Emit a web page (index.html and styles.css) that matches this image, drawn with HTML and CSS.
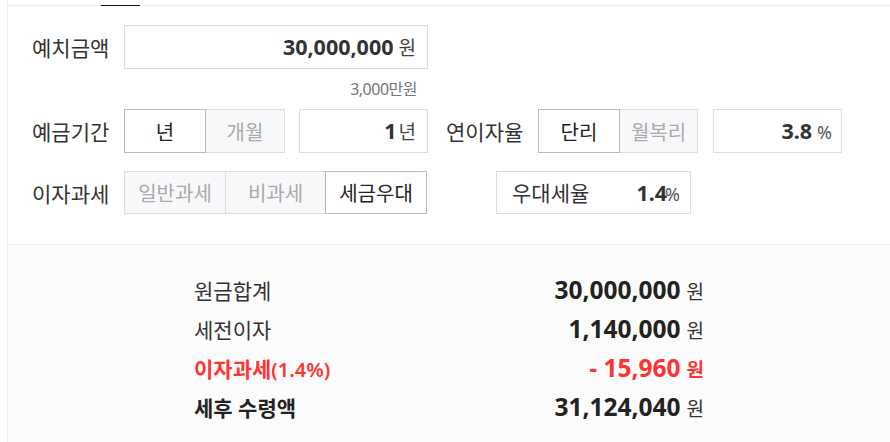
FILE: index.html
```html
<!DOCTYPE html>
<html lang="ko">
<head>
<meta charset="utf-8">
<title>예금 계산기</title>
<link rel="stylesheet" href="styles.css">
</head>
<body>
<div class="page">
  <div class="tabs"><div class="tab"></div></div>
  <div class="form">
    <div class="row row1">
      <div class="label">예치금액</div>
      <div class="field field-wide"><span class="num">30,000,000</span><span class="unit">원</span></div>
    </div>
    <div class="sub">3,000만원</div>
    <div class="row row2">
      <div class="label">예금기간</div>
      <div class="seg">
        <div class="btn on w82">년</div>
        <div class="btn w80">개월</div>
      </div>
      <div class="field field-mid"><span class="num">1</span><span class="unit tight">년</span></div>
      <div class="label label-2">연이자율</div>
      <div class="seg">
        <div class="btn on w82">단리</div>
        <div class="btn w79">월복리</div>
      </div>
      <div class="field field-mid field-rate2"><span class="num">3.8</span><span class="unit pct">%</span></div>
    </div>
    <div class="row row3">
      <div class="label">이자과세</div>
      <div class="seg">
        <div class="btn w102">일반과세</div>
        <div class="btn w101">비과세</div>
        <div class="btn on w102">세금우대</div>
      </div>
      <div class="field field-rate">
        <span class="rate-label">우대세율</span>
        <span class="rate-val"><span class="num">1.4</span><span class="unit pct overlap">%</span></span>
      </div>
    </div>
  </div>
  <div class="result">
    <div class="res-row">
      <div class="res-label">원금합계</div>
      <div class="res-val"><span class="res-num">30,000,000</span><span class="res-unit">원</span></div>
    </div>
    <div class="res-row">
      <div class="res-label">세전이자</div>
      <div class="res-val"><span class="res-num">1,140,000</span><span class="res-unit">원</span></div>
    </div>
    <div class="res-row red">
      <div class="res-label">이자과세<span class="small">(1.4%)</span></div>
      <div class="res-val"><span class="res-num">- 15,960</span><span class="res-unit">원</span></div>
    </div>
    <div class="res-row total">
      <div class="res-label">세후 수령액</div>
      <div class="res-val"><span class="res-num">31,124,040</span><span class="res-unit">원</span></div>
    </div>
  </div>
</div>
</body>
</html>
```

FILE: styles.css
```css
* { box-sizing: border-box; }
html, body { margin: 0; padding: 0; background: #fff; }
body {
  font-family: "Noto Sans", "Noto Sans CJK KR", sans-serif;
  color: #333;
}
.page {
  margin-left: 7px;
  border-left: 1px solid #eee;
  min-height: 442px;
  display: flex;
  flex-direction: column;
}
.tabs {
  height: 6px;
  border-bottom: 1px solid #eee;
  display: flex;
  padding-left: 93px;
}
.tab {
  width: 39px;
  height: 6px;
  border-bottom: 1px solid #111;
  flex: none;
}
.form {
  padding: 19px 0 30px 24px;
  border-bottom: 1px solid #eee;
}
.row {
  display: flex;
  align-items: stretch;
}
.row1, .row2 { height: 44px; }
.row3 { height: 43px; margin-top: 18px; }
.label {
  width: 92px;
  flex: none;
  font-size: 21px;
  display: flex;
  align-items: center;
  color: #333;
  white-space: nowrap;
}
.label-2 { margin-left: 18px; }
.field {
  border: 1px solid #ddd;
  background: #fff;
  display: flex;
  align-items: baseline;
  justify-content: flex-end;
  padding: 0 11px 0 0;
  line-height: 42px;
  flex: none;
}
.field-wide { width: 304px; }
.field-mid { width: 129px; margin-left: 14px; }
.field-rate2 { margin-left: 15px; padding-right: 9px; }
.num {
  font-weight: 700;
  font-size: 21.5px;
  color: #333;
}
.unit {
  font-size: 19px;
  color: #444;
  margin-left: 5px;
}
.unit.tight { margin-left: 2px; }
.unit.pct { font-size: 18px; color: #555; }
.unit.overlap { margin-left: -2px; }
.sub {
  margin-left: 92px;
  width: 304px;
  height: 40px;
  line-height: 40px;
  text-align: right;
  padding-right: 11px;
  font-size: 16px;
  color: #777;
  letter-spacing: -0.5px;
}
.seg { display: flex; flex: none; }
.btn {
  border: 1px solid #ddd;
  background: #f7f8fa;
  color: #aaa;
  font-size: 20px;
  display: flex;
  align-items: center;
  justify-content: center;
  position: relative;
  white-space: nowrap;
}
.btn + .btn { margin-left: -1px; }
.btn.on {
  background: #fff;
  border-color: #bbb;
  color: #222;
  z-index: 1;
}
.w82 { width: 82px; }
.w80 { width: 80px; }
.w79 { width: 79px; }
.w102 { width: 102px; }
.w101 { width: 101px; }
.field-rate {
  width: 195px;
  margin-left: 69px;
  justify-content: space-between;
  padding: 0 10px 0 15px;
}
.rate-label { font-size: 21px; color: #333; }
.rate-val { display: flex; align-items: baseline; }
.result {
  flex: 1;
  background: #fcfcfc;
  padding: 25px 0 20px 186px;
}
.res-row {
  width: 510px;
  height: 39px;
  display: flex;
  justify-content: space-between;
  align-items: baseline;
  line-height: 39px;
}
.res-label { font-size: 21px; color: #333; white-space: nowrap; }
.res-val { display: flex; align-items: baseline; }
.res-num { font-size: 24.5px; font-weight: 700; color: #222; }
.res-unit { font-size: 19px; color: #333; margin-left: 6px; }
.red .res-label, .red .res-num, .red .res-unit { color: #ff3333; }
.red .res-label { font-weight: 600; }
.red .res-unit { font-weight: 700; }
.small { font-size: 20px; }
.total .res-label { font-weight: 700; color: #222; }
```
